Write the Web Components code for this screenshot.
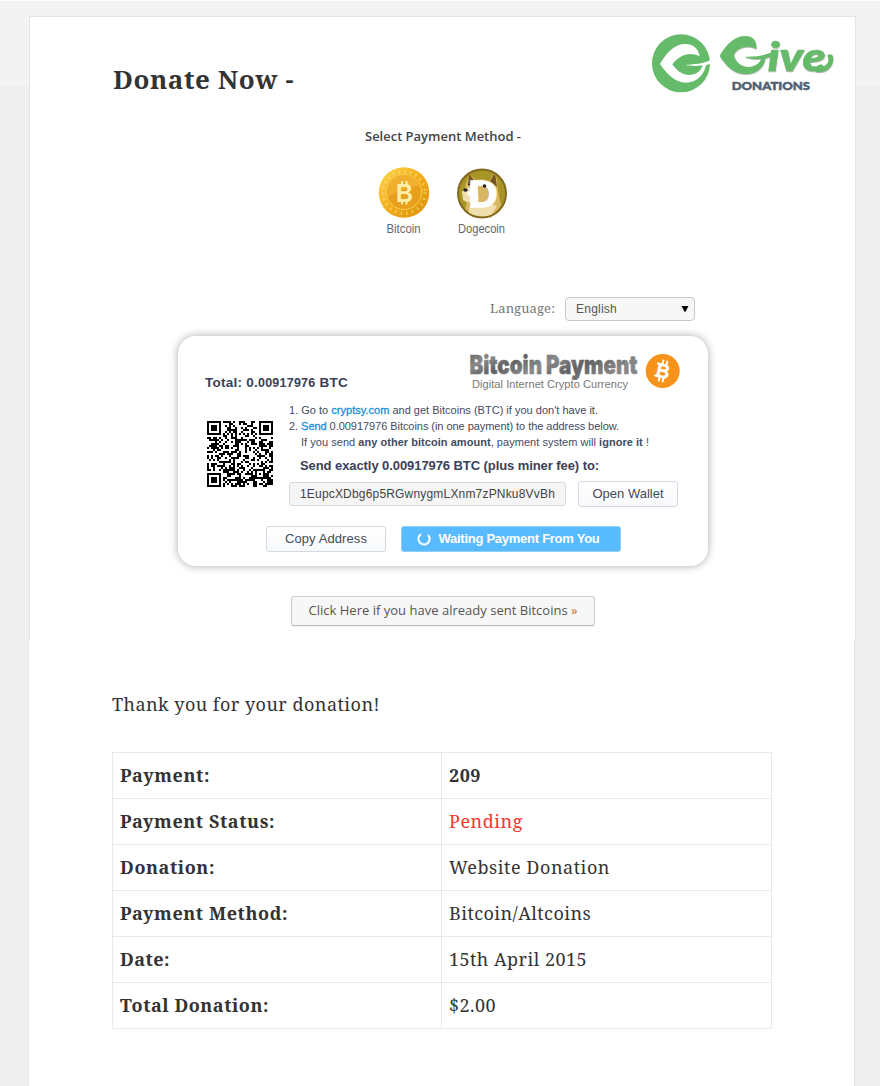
<!DOCTYPE html>
<html lang="en">
<head>
<meta charset="utf-8">
<title>Donate Now</title>
<style>
html{background:#efefef}
body{margin:0;min-height:1086px;background:linear-gradient(#fff 1px,#f3f3f3 1px,#f3f3f3 86px,#efefef 86px);font-family:"Noto Serif","Droid Serif","DejaVu Serif",serif;color:#333}
</style>
</head>
<body>
<donation-page></donation-page>
<script>
const define=(name,html,setup)=>customElements.define(name,class extends HTMLElement{
  constructor(){super();const t=document.createElement('template');t.innerHTML=html;this.attachShadow({mode:'open'}).append(t.content.cloneNode(true));}
  connectedCallback(){if(setup)setup(this,this.shadowRoot);}
});

/* One line of text whose tracking is adjusted so that it fills width w. */
define('fit-line',`<style>:host{display:block;white-space:nowrap}span{display:inline-block}</style><span><slot></slot></span>`,(el,root)=>{
  const s=root.querySelector('span'),n=el.textContent.length,w=+el.getAttribute('w');
  const natural=s.getBoundingClientRect().width;
  if(w&&natural)s.style.letterSpacing=((w-natural)/n)+'px';
});

define('give-logo',`<style>:host{display:block;width:184px;height:64px}svg{display:block;overflow:visible}</style>
<svg width="184" height="64" viewBox="36 39 552 192">
<circle cx="123" cy="130" r="87" fill="#66bb6a"/>
<path fill="#fff" d="M60 132C82 94 106 72 136 72C160 72 175 85 179 109C150 94 118 105 97 133C115 160 145 176 174 157C182 150 186 143 188 136C170 139 150 138 136 135C165 132 190 132 212 120V131L198 136C192 165 170 188 138 188C105 188 78 160 60 132Z"/>
<g fill="#66bb6a" style="filter:drop-shadow(1px 3px 1px #0004)">
<path d="M239 107C260 70 286 48 316 48C340 48 351 62 349 87C320 71 288 85 282 105C286 130 312 146 338 139C352 134 360 126 364 116C347 119 326 115 313 110C345 111 375 108 402 92V104C393 110 386 113 377 115C370 145 350 162 318 162C282 162 257 137 239 107Z"/>
<text x="383" y="153" font-family="Lato" font-size="122" font-weight="900" font-style="italic" stroke="#66bb6a" stroke-width="2" textLength="174" lengthAdjust="spacingAndGlyphs">ive</text>
<path d="M545 141C560 138 572 124 562 106C574 98 580 106 580 116C580 141 556 163 525 155Z"/></g>
<text x="275" y="210" font-family="Lato" font-size="36" font-weight="900" fill="#51606f" stroke="#51606f" stroke-width="1.6" textLength="235" lengthAdjust="spacingAndGlyphs">DONATIONS</text>
</svg>`);

define('coin-option',`<style>:host{display:block;width:60px;height:72px}svg{display:none;overflow:visible}:host([kind=bitcoin]) .b,:host([kind=doge]) .d{display:block}</style>
<svg class="b" width="60" height="72" viewBox="0 0 60 72">
<defs><linearGradient id="g" x2="1" y2="1"><stop stop-color="#ffd951"/><stop offset=".5" stop-color="#f2ad1c"/><stop offset="1" stop-color="#d98e09"/></linearGradient></defs>
<circle cx="30" cy="26.5" r="25.3" fill="url(#g)"/><circle cx="30" cy="26.5" r="21" fill="none" stroke="#ffe48a" stroke-width="3.2" stroke-dasharray="1.4 4.4" opacity=".65"/>
<circle cx="30" cy="26" r="17.5" fill="#e89f1c" stroke="#f9cd52"/><path d="M14 20A17 17 0 0 1 46 20Q28 21 14 31Z" fill="#f4b734" opacity=".7"/>
<path d="M28 15v4M32.5 15v4M28 34v4.5M32.5 34v4.5" stroke="#ffefae" stroke-width="2"/>
<text x="22" y="35.5" font-family="Liberation Sans" font-weight="700" font-size="25" fill="#ffedaa" textLength="17" lengthAdjust="spacingAndGlyphs">B</text>
<text x="12.5" y="67" font-family="Liberation Sans" font-size="12.5" fill="#666" textLength="34" lengthAdjust="spacingAndGlyphs">Bitcoin</text></svg>
<svg class="d" width="60" height="72" viewBox="0 0 60 72">
<defs><clipPath id="c"><circle cx="30" cy="27.5" r="23"/></clipPath></defs>
<circle cx="30" cy="27.5" r="24" fill="#a79626" stroke="#85691f" stroke-width="2"/>
<g clip-path="url(#c)"><path d="M17 8L24 14Q30 12 37 15L43 6Q46 15 46 25L49 39Q44 49 33 52Q18 50 13 43L15 36Q10 30 13 21Z" fill="#d9b661"/>
<path d="M10 26Q15 19 25 22L27 35Q17 39 11 34ZM18 39Q29 34 45 40L38 51L16 49Z" fill="#f0dfae"/><path d="M17 8L22 14L16 19ZM43 7L38 15L45 21Z" fill="#745525"/></g>
<text x="16.5" y="40.5" font-family="Liberation Sans" font-weight="700" font-size="37" fill="#fff" stroke="#fff" stroke-width="1.6" textLength="29" lengthAdjust="spacingAndGlyphs">D</text>
<path d="M15.500 27.500h10" stroke="#fff" stroke-width="4"/><ellipse cx="13.500" cy="24" rx="2.200" ry="1.800" fill="#222"/><circle cx="17" cy="18.500" r="1" fill="#222"/><circle cx="32.500" cy="20" r="1.800" fill="#222"/>
<text x="6" y="67" font-family="Liberation Sans" font-size="12.5" fill="#666" textLength="47" lengthAdjust="spacingAndGlyphs">Dogecoin</text></svg>`);

define('payment-logo',`<style>:host{display:block;width:211px;height:39px}svg{display:block;overflow:visible}</style>
<svg width="211" height="39" viewBox="469 353 211 39">
<defs><linearGradient id="m" x1="0" y1="0" x2="1" y2=".35"><stop stop-color="#666"/><stop offset=".2" stop-color="#888"/><stop offset=".35" stop-color="#606163"/><stop offset=".55" stop-color="#8b8c8d"/><stop offset=".75" stop-color="#606163"/><stop offset="1" stop-color="#888"/></linearGradient></defs>
<text x="469.500" y="374" font-family="Inter" font-size="26" font-weight="900" fill="url(#m)" stroke="url(#m)" stroke-width=".5" textLength="168" lengthAdjust="spacingAndGlyphs">Bitcoin Payment</text>
<text x="472" y="388" font-family="Liberation Sans" font-size="11" fill="#777" textLength="156">Digital Internet Crypto Currency</text>
<circle cx="662.7" cy="371" r="17" fill="#f7931a"/>
<g transform="rotate(13 663 371)" fill="#fff"><text x="656.5" y="378" font-family="Liberation Sans" font-weight="700" font-size="20" stroke="#fff" stroke-width=".4" textLength="13.5" lengthAdjust="spacingAndGlyphs">B</text><path d="M660 360h2v5h-2zM664 360h2v5h-2zM660 377h2v5h-2zM664 377h2v5h-2zM655.5 363.8h4v2h-4zM655.5 376h4v2h-4z"/></g>
</svg>`);

/* QR symbol, version 4, level L, byte mode. */
function qrMatrix(text){
  const N=33,DATA=80,EC=20,bits=[];
  const put=(v,n)=>{for(let i=n-1;i>=0;i--)bits.push(v>>i&1)};
  put(4,4);put(text.length,8);for(const ch of text)put(ch.charCodeAt(0),8);
  put(0,4);while(bits.length%8)bits.push(0);
  const data=[];for(let i=0;i<bits.length;i+=8)data.push(parseInt(bits.slice(i,i+8).join(''),2));
  for(let p=0xEC;data.length<DATA;p^=0xFD)data.push(p);
  const mul=(a,b)=>{let r=0;for(;b;b>>=1){if(b&1)r^=a;a<<=1;if(a&256)a^=0x11D}return r};
  let gen=[1],root=1;
  for(let i=0;i<EC;i++){const g=[...gen,0];gen.forEach((c,j)=>g[j+1]^=mul(c,root));gen=g;root=mul(root,2)}
  const rem=Array(EC).fill(0);
  for(const d of data){const f=d^rem.shift();rem.push(0);for(let j=0;j<EC;j++)rem[j]^=mul(gen[j+1],f)}
  const stream=[...data,...rem].flatMap(b=>[7,6,5,4,3,2,1,0].map(i=>b>>i&1));
  const m=Array.from({length:N},()=>Array(N).fill(0)),fn=Array.from({length:N},()=>Array(N).fill(false));
  const set=(x,y,v)=>{if(x>=0&&y>=0&&x<N&&y<N){m[y][x]=v?1:0;fn[y][x]=true}};
  for(let i=0;i<N;i++){set(6,i,i%2==0);set(i,6,i%2==0)}
  for(const [cx,cy] of [[3,3],[N-4,3],[3,N-4]])for(let y=-4;y<=4;y++)for(let x=-4;x<=4;x++){const d=Math.max(Math.abs(x),Math.abs(y));set(cx+x,cy+y,d!=2&&d!=4)}
  for(let y=-2;y<=2;y++)for(let x=-2;x<=2;x++)set(26+x,26+y,Math.max(Math.abs(x),Math.abs(y))!=1);
  const format=k=>{
    const d=8|k;let r=d;for(let i=0;i<10;i++)r=(r<<1)^((r>>9)*0x537);
    const b=(d<<10|r)^0x5412,g=i=>b>>i&1;
    for(let i=0;i<=5;i++)set(8,i,g(i));set(8,7,g(6));set(8,8,g(7));set(7,8,g(8));
    for(let i=9;i<15;i++)set(14-i,8,g(i));
    for(let i=0;i<8;i++)set(N-1-i,8,g(i));for(let i=8;i<15;i++)set(8,N-15+i,g(i));set(8,N-8,1);
  };
  format(0);
  let i=0;
  for(let r=N-1;r>=1;r-=2){if(r==6)r=5;for(let v=0;v<N;v++)for(let j=0;j<2;j++){const x=r-j,up=((r+1)&2)==0,y=up?N-1-v:v;if(!fn[y][x]&&i<stream.length)m[y][x]=stream[i++]}}
  const F=[(x,y)=>(x+y)%2,(x,y)=>y%2,(x,y)=>x%3,(x,y)=>(x+y)%3,(x,y)=>((x/3|0)+(y/2|0))%2,(x,y)=>x*y%2+x*y%3,(x,y)=>(x*y%2+x*y%3)%2,(x,y)=>((x+y)%2+x*y%3)%2];
  const flip=k=>{for(let y=0;y<N;y++)for(let x=0;x<N;x++)if(!fn[y][x]&&F[k](x,y)==0)m[y][x]^=1};
  const score=()=>{let s=0,dark=0;const lines=[...m,...m[0].map((_,x)=>m.map(r=>r[x]))].map(r=>r.join(''));
    for(const l of lines){for(const q of l.match(/0+|1+/g))if(q.length>=5)s+=q.length-2;for(let j=0;j<=N-11;j++){const q=l.substr(j,11);if(q=='10111010000'||q=='00001011101')s+=40}}
    for(let y=0;y<N;y++)for(let x=0;x<N;x++){dark+=m[y][x];if(x<N-1&&y<N-1&&m[y][x]==m[y][x+1]&&m[y][x]==m[y+1][x]&&m[y][x]==m[y+1][x+1])s+=3}
    return s+Math.floor(Math.abs(dark*20-N*N*10)/(N*N))*10};
  let best=0,low=1e9;
  for(let k=0;k<8;k++){flip(k);format(k);const s=score();if(s<low){low=s;best=k}flip(k)}
  flip(best);format(best);return m;
}
define('qr-code',`<style>:host{display:block;width:66px;height:66px}svg{display:block}</style><svg width="66" height="66" viewBox="0 0 33 33" shape-rendering="crispEdges"><path/></svg>`,(el,root)=>{
  let d='';qrMatrix(el.getAttribute('value')).forEach((r,y)=>r.forEach((v,x)=>{if(v)d+=`M${x} ${y}h1v1h-1z`}));root.querySelector('path').setAttribute('d',d);
});

define('soft-button',`<style>:host{display:flex;box-sizing:border-box;height:26px;align-items:center;justify-content:center;border:1px solid #d3d8e2;border-radius:3px;background:linear-gradient(#fff,#f8f9fb);color:#434b5e;font:13px/24px "Liberation Sans",Arial,sans-serif}
:host([primary]){background:#58bbff;border-color:#8fd0fb;color:#fff;font-weight:700;gap:7px;padding-right:7px}svg{display:none}:host([primary]) svg{display:block}</style>
<svg width="16" height="16" viewBox="0 0 16 16"><path d="M5 3.200A5.600 5.600 0 1 0 12 4" fill="none" stroke="#fff" stroke-width="2"/></svg><slot></slot>`);

define('language-picker',`<style>:host{display:flex;gap:10px;justify-content:flex-end;height:24px;line-height:22px;font-size:13px;color:#777}
.s{box-sizing:border-box;width:130px;height:24px;border:1px solid #c8c8c8;border-radius:4px;background:#f7f7f7;padding:0 5px 0 10px;display:flex;justify-content:space-between;align-items:center;font:12px/22px "Liberation Sans",Arial,sans-serif;color:#555}</style>
<fit-line w="65">Language:</fit-line><div class="s"><fit-line w="41">English</fit-line><svg width="8" height="7"><path d="M.5 0h7L4 6.500z"/></svg></div>`);

define('payment-box',`<style>:host{display:block;box-sizing:border-box;width:530px;height:230px;border-radius:18px;background:#fff;box-shadow:0 0 8px #aaa;font-family:"Liberation Sans",Arial,sans-serif;color:#434b5e;padding:17px 28px 0 27px}
.top{display:flex;justify-content:space-between;height:49px}.total{margin-top:20px;font:700 13.5px/20px "Liberation Sans",Arial,sans-serif;color:#3a4158}.total small{font-size:12.5px}
.mid{display:flex;gap:16px;padding-left:2px;height:105px}qr-code{margin-top:19px}
.info{font-size:11px;line-height:16px}.in{padding-left:12px}a{color:#1a8fdc;-webkit-text-stroke:.3px #1a8fdc}
.send{padding-left:11px;margin-top:6px;font:700 13px/20px "Liberation Sans",Arial,sans-serif;color:#3a4158}
.row{display:flex;gap:12px;margin-top:5px;align-items:center}.addr{box-sizing:border-box;width:277px;height:24px;border:1px solid #d6d9e0;border-radius:3px;background:#f5f5f5;padding-left:10px;color:#444;font-size:12px;line-height:22px}
.open{width:100px}.foot{display:flex;gap:15px;padding-left:61px;margin-top:19px}.copy{width:120px}.wait{width:220px}</style>
<div class="top"><fit-line class="total" w="143">Total: 0.<small>00917976</small> BTC</fit-line><payment-logo></payment-logo></div>
<div class="mid"><qr-code value="bitcoin:1EupcXDbg6p5RGwnygmLXnm7zPNku8VvBh?amount=0.00917976"></qr-code>
<div class="info"><fit-line w="309">1. Go to <a>cryptsy.com</a> and get Bitcoins (BTC) if you don't have it.</fit-line>
<fit-line w="330">2. <a>Send</a> 0.00917976 Bitcoins (in one payment) to the address below.</fit-line>
<fit-line class="in" w="348">If you send <b>any other bitcoin amount</b>, payment system will <b>ignore it</b> !</fit-line>
<fit-line class="send" w="299">Send exactly 0.00917976 BTC (plus miner fee) to:</fit-line>
<div class="row"><div class="addr"><fit-line w="255">1EupcXDbg6p5RGwnygmLXnm7zPNku8VvBh</fit-line></div><soft-button class="open"><fit-line w="71">Open Wallet</fit-line></soft-button></div></div></div>
<div class="foot"><soft-button class="copy"><fit-line w="82">Copy Address</fit-line></soft-button><soft-button class="wait" primary><fit-line w="161">Waiting Payment From You</fit-line></soft-button></div>`);

define('detail-table',`<style>:host{display:grid;grid-template-columns:328px 329px;width:660px;box-sizing:border-box;gap:1px;background:#e9e9e9;border:1px solid #e9e9e9;font-size:18px;line-height:45px}
div{background:#fff;padding-left:7px;height:45px}.k{font-weight:700}</style>`,(el,root)=>{
  [['Payment:',90,'209',32],['Payment Status:',155,'Pending',74],['Donation:',95,'Website Donation',161],['Payment Method:',168,'Bitcoin/Altcoins',142],['Date:',50,'15th April 2015',138],['Total Donation:',149,'$2.00',47]].forEach(([k,kw,v,vw],i)=>{
    const row=document.createElement('template');
    row.innerHTML=`<div class="k"><fit-line w="${kw}">${k}</fit-line></div><div style="${i==0?'font-weight:700':i==1?'color:#f0392b':''}"><fit-line w="${vw}">${v}</fit-line></div>`;
    root.append(row.content);
  });
});

define('paper-panel',`<style>:host{display:block;box-sizing:content-box;width:825px;background:#fff;border:solid #e5e5e5;border-width:0 1px}</style><slot></slot>`);

define('donation-page',`<style>:host{display:block;padding-top:16px;height:1070px;overflow:hidden}
.one{margin-left:29px;height:623px;border-top-width:1px}.two{margin-left:28px;height:446px}
header{display:flex;justify-content:space-between;align-items:flex-start;height:93px;padding:0 19px 0 83px;box-sizing:border-box}
give-logo{margin-top:16px}
h1{font-size:26px;line-height:36px;margin:44px 0 0}
.method{font:600 13px/20px "Open Sans",sans-serif;color:#444;display:flex;justify-content:center;margin-top:16px;padding-left:1px}
.coins{display:flex;gap:18px;margin:20px 0 0 344px}
language-picker{margin:59px 160px 0 0}payment-box{margin:15px 0 0 148px}
.sent{box-sizing:border-box;width:304px;height:30px;margin:30px 0 0 261px;border:1px solid #ccc;border-bottom-color:#bbb;border-radius:3px;background:#f7f7f7;box-shadow:0 1px 1px #0001;font:13px/27px "Open Sans",sans-serif;color:#555;display:flex;justify-content:center}.sent i{font-style:normal;color:#d26a1c}
.thanks{padding:49px 0 0 83px;font-size:18px;line-height:30px}detail-table{margin:33px 0 0 83px}</style>
<paper-panel class="one"><header><h1><fit-line w="181">Donate Now -</fit-line></h1><give-logo></give-logo></header>
<div class="method"><fit-line w="156">Select Payment Method -</fit-line></div>
<div class="coins"><coin-option kind="bitcoin"></coin-option><coin-option kind="doge"></coin-option></div>
<language-picker></language-picker><payment-box></payment-box>
<div class="sent"><fit-line w="269">Click Here if you have already sent Bitcoins <i>»</i></fit-line></div></paper-panel>
<paper-panel class="two"><div class="thanks"><fit-line w="268">Thank you for your donation!</fit-line></div><detail-table></detail-table></paper-panel>`);
</script>
</body>
</html>
